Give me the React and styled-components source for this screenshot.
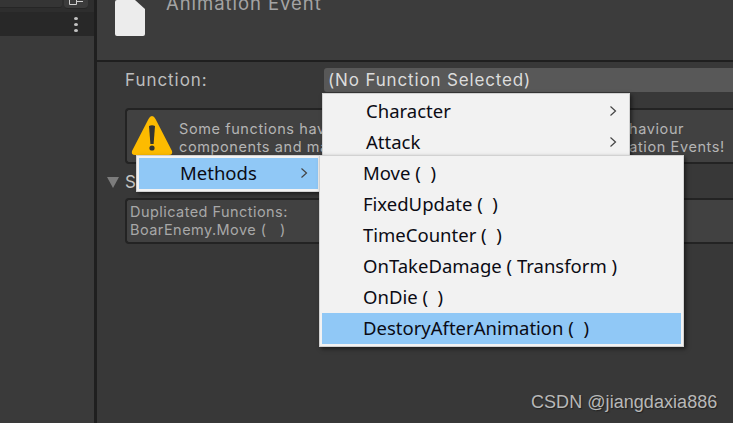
import React from 'react'
import styled, { createGlobalStyle } from 'styled-components'

const GlobalStyle = createGlobalStyle`
  html, body { margin: 0; padding: 0; background: #383838; overflow: hidden; }
  #root { width: 733px; height: 423px; }
`

const Screen = styled.div`
  position: relative;
  width: 733px;
  height: 423px;
  display: flex;
  overflow: hidden;
  background: #383838;
  font-family: "Inter", "Noto Sans", sans-serif;
`

const Sidebar = styled.div`
  width: 94px;
  flex: none;
  display: flex;
  flex-direction: column;
  background: #3a3a3a;
  border-right: 3px solid #1f1f1f;
`

const SidebarTop = styled.div`
  height: 12px;
  display: flex;
  gap: 2px;
  padding-right: 6px;
  background: #2e2e2e;
`

const TabStrip = styled.div`
  flex: 1;
  height: 7px;
  background: #353535;
  border-bottom: 1px solid #262626;
  border-radius: 0 0 3px 0;
`

const LayoutButton = styled.div`
  width: 24px;
  height: 8px;
  display: flex;
  justify-content: center;
  background: #3c3c3c;
  border-bottom: 1px solid #262626;
  border-radius: 0 0 4px 4px;
`

const SidebarBar = styled.div`
  height: 24px;
  display: flex;
  justify-content: flex-end;
  align-items: center;
  padding-right: 16px;
  background: #282828;
`

const Dots = styled.div`
  display: flex;
  flex-direction: column;
  gap: 3px;
  span {
    width: 4px;
    height: 3px;
    border-radius: 50%;
    background: #c4c4c4;
  }
`

const Inspector = styled.div`
  flex: 1;
  display: flex;
  flex-direction: column;
  min-width: 0;
`

const Header = styled.div`
  height: 62px;
  flex: none;
  display: flex;
  box-sizing: border-box;
  padding-left: 18px;
  gap: 21px;
  background: #3c3c3c;
  border-bottom: 2px solid #1f1f1f;
`

const Title = styled.div`
  margin-top: -7px;
  font-size: 18.5px;
  line-height: 20px;
  letter-spacing: 0.95px;
  color: #a4a4a4;
`

const Body = styled.div`
  padding: 6px 0 0 10px;
`

const FunctionRow = styled.div`
  display: flex;
  align-items: center;
  height: 24px;
  padding-left: 18px;
`

const FieldLabel = styled.div`
  width: 199px;
  flex: none;
  font-size: 17px;
  letter-spacing: 0.95px;
  color: #bdbdbd;
`

const Dropdown = styled.div`
  flex: 1;
  height: 24px;
  line-height: 24px;
  padding-left: 4px;
  font-size: 17px;
  letter-spacing: 0.85px;
  color: #dcdcdc;
  background: #585858;
  border-radius: 3px 0 0 3px;
`

const HelpBox = styled.div`
  display: flex;
  height: 56px;
  box-sizing: border-box;
  margin: 16px 0 0 18px;
  padding: 10px 0 0 52px;
  background: #414141;
  border: 2px solid #232323;
  border-right: none;
  border-radius: 4px 0 0 4px;
  font-size: 14.5px;
  line-height: 18px;
  letter-spacing: 0.6px;
  color: #b4b4b4;
  white-space: pre;
`

const FoldRow = styled.div`
  display: flex;
  align-items: center;
  gap: 6px;
  height: 18px;
  margin-top: 9px;
  font-size: 17px;
  color: #c4c4c4;
`

const Fold = styled.div`
  width: 0;
  height: 0;
  border-left: 6px solid transparent;
  border-right: 6px solid transparent;
  border-top: 11px solid #7c7c7c;
`

const MessageBox = styled(HelpBox)`
  height: 46px;
  margin-top: 7px;
  padding: 3px 0 0 3px;
  font-size: 14.5px;
  letter-spacing: 0.45px;
  color: #a8a8a8;
`

const Warning = styled.svg`
  position: absolute;
  left: 131px;
  top: 115px;
  width: 42px;
  height: 42px;
`

const Menu = styled.div`
  position: absolute;
  left: ${p => p.$left}px;
  top: ${p => p.$top}px;
  width: ${p => p.$width}px;
  box-sizing: border-box;
  padding: 2px;
  background: #f2f2f2;
  border: 1px solid #d2d2d2;
  box-shadow: 2px 2px 4px rgba(0, 0, 0, 0.5);
  font-family: "Noto Sans", sans-serif;
  font-size: 18.5px;
  color: #0b0b14;
`

const Item = styled.div`
  height: 31px;
  box-sizing: border-box;
  line-height: 29px;
  display: flex;
  justify-content: space-between;
  align-items: center;
  padding: 0 10px 2px ${p => p.$indent}px;
  white-space: pre;
  background: ${p => (p.$active ? '#90c8f6' : 'transparent')};
`

const Chevron = styled.svg`
  width: 8px;
  height: 12px;
  flex: none;
  fill: none;
  stroke: #444;
  stroke-width: 1.2;
`

const Watermark = styled.div`
  position: absolute;
  left: 531px;
  top: 391px;
  font-family: "Liberation Sans", sans-serif;
  font-size: 18px;
  line-height: 22px;
  letter-spacing: 0.05px;
  color: #b8b8b8;
  text-shadow: 1px 1px 1px #222;
`

function Arrow() {
  return (
    <Chevron viewBox="0 0 8 12">
      <path d="M1.5 1.5 L6.5 6 L1.5 10.5" />
    </Chevron>
  )
}

const methods = [
  'Move (  )',
  'FixedUpdate (  )',
  'TimeCounter (  )',
  'OnTakeDamage ( Transform )',
  'OnDie (  )',
  'DestoryAfterAnimation (  )',
]

export default function App() {
  return (
    <Screen>
      <GlobalStyle />
      <Sidebar>
        <SidebarTop>
          <TabStrip />
          <LayoutButton>
            <svg width="18" height="6" viewBox="0 0 18 6" fill="none" stroke="#cfcfcf">
              <path d="M2.5 0 V4.5 H9.5 V0 M9.5 1.5 H16" />
            </svg>
          </LayoutButton>
        </SidebarTop>
        <SidebarBar>
          <Dots>
            <span />
            <span />
            <span />
          </Dots>
        </SidebarBar>
      </Sidebar>
      <Inspector>
        <Header>
          <svg width="30" height="36" viewBox="0 0 30 36">
            <path d="M2 0 H20 L30 9 V34 Q30 36 28 36 H2 Q0 36 0 34 V2 Q0 0 2 0 Z" fill="#ececec" />
          </svg>
          <Title>Animation Event</Title>
        </Header>
        <Body>
          <FunctionRow>
            <FieldLabel>Function:</FieldLabel>
            <Dropdown>(No Function Selected)</Dropdown>
          </FunctionRow>
          <HelpBox>{'Some functions have the same name across several MonoBehaviour\ncomponents and may not work as intended when using Animation Events!'}</HelpBox>
          <FoldRow>
            <Fold />
            <span>Selected</span>
          </FoldRow>
          <MessageBox>{'Duplicated Functions:\nBoarEnemy.Move (   )'}</MessageBox>
        </Body>
      </Inspector>
      <Warning viewBox="0 0 42 42">
        <path d="M21 1 Q23 1 24.5 4 L41 36 Q42 40 38 40 H4 Q0 40 1 36 L17.5 4 Q19 1 21 1 Z" fill="#fdbb00" />
        <path d="M18 11 Q21 9.5 24 11 L22.6 29 H19.4 Z" fill="#333" />
        <circle cx="21" cy="33" r="2.6" fill="#333" />
      </Warning>
      <Menu $left={322} $top={93} $width={308}>
        <Item $indent={41}>Character<Arrow /></Item>
        <Item $indent={41}>Attack<Arrow /></Item>
      </Menu>
      <Menu $left={136} $top={155} $width={185}>
        <Item $indent={41} $active>Methods<Arrow /></Item>
      </Menu>
      <Menu $left={319} $top={155} $width={365}>
        {methods.map((m, i) => (
          <Item key={m} $indent={41} $active={i === methods.length - 1}>{m}</Item>
        ))}
      </Menu>
      <Watermark>CSDN @jiangdaxia886</Watermark>
    </Screen>
  )
}
